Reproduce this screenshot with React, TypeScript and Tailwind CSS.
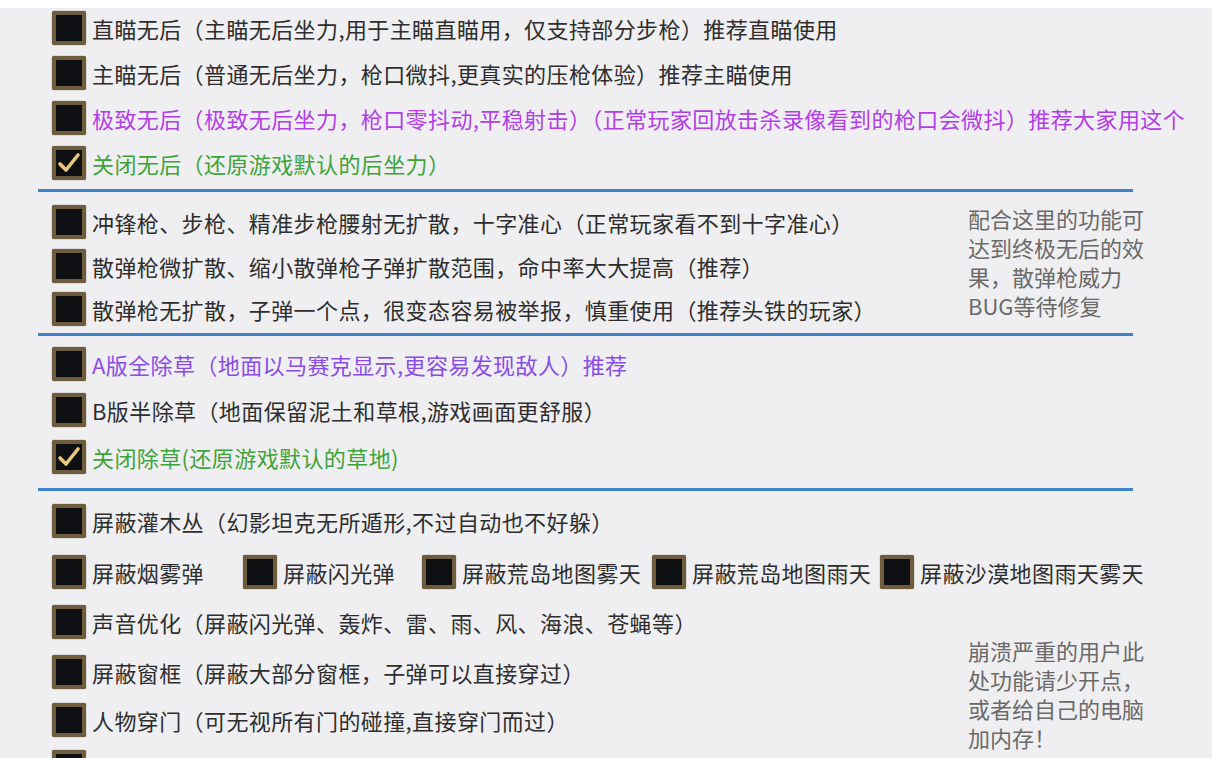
import React from "react";

const font = { fontFamily: '"Noto Sans CJK SC", "Noto Sans", sans-serif' };

function Box({ checked = false }: { checked?: boolean }) {
  return (
    <div className="flex h-[34px] w-[34px] shrink-0 items-center justify-center rounded-[2px] border-[4px] border-[#6f5c3c] bg-[#0e0f12] shadow-[0_0_1px_#3a2f1e]">
      {checked && (
        <svg viewBox="0 0 24 24" className="h-[24px] w-[24px]">
          <path d="M3 13 L9 19 L21 4" fill="none" stroke="#e9c77c" strokeWidth="3.6" strokeLinecap="round" strokeLinejoin="round" />
        </svg>
      )}
    </div>
  );
}

function Row({
  text,
  color = "text-[#2e2e2e]",
  checked,
  className = "",
}: {
  text: string;
  color?: string;
  checked?: boolean;
  className?: string;
}) {
  return (
    <div className={`flex shrink-0 items-center gap-[6px] ${className}`}>
      <Box checked={checked} />
      <span className={`whitespace-nowrap text-[22px] leading-[34px] tracking-[0.4px] ${color}`}>{text}</span>
    </div>
  );
}

function Divider({ className = "" }: { className?: string }) {
  return <div className={`ml-[38px] h-[3px] w-[1095px] bg-[#3f82cc] ${className}`} />;
}

function Note({ lines, className = "" }: { lines: string[]; className?: string }) {
  return (
    <div className={`text-[22px] leading-[29px] text-[#6a6a6a] ${className}`}>
      {lines.map((l) => (
        <div key={l} className="whitespace-nowrap">
          {l}
        </div>
      ))}
    </div>
  );
}

export default function App() {
  return (
    <div style={font} className="h-[758px] w-[1212px] overflow-hidden bg-[#efeff1]">
      <div className="h-[8px] bg-white" />
      <div className="flex flex-col pl-[52px] pt-[3px]">
        <Row text="直瞄无后（主瞄无后坐力,用于主瞄直瞄用，仅支持部分步枪）推荐直瞄使用" />
        <Row className="mt-[11px]" text="主瞄无后（普通无后坐力，枪口微抖,更真实的压枪体验）推荐主瞄使用" />
        <Row
          className="mt-[11px]"
          color="text-[#b23ee6]"
          text="极致无后（极致无后坐力，枪口零抖动,平稳射击）（正常玩家回放击杀录像看到的枪口会微抖）推荐大家用这个"
        />
        <Row className="mt-[11px]" checked color="text-[#3ea33a]" text="关闭无后（还原游戏默认的后坐力）" />
      </div>
      <Divider className="mt-[9px]" />

      <div className="flex pl-[52px] pt-[13px]">
        <div className="flex w-[916px] flex-col">
          <Row text="冲锋枪、步枪、精准步枪腰射无扩散，十字准心（正常玩家看不到十字准心）" />
          <Row className="mt-[10px]" text="散弹枪微扩散、缩小散弹枪子弹扩散范围，命中率大大提高（推荐）" />
          <Row className="mt-[9px]" text="散弹枪无扩散，子弹一个点，很变态容易被举报，慎重使用（推荐头铁的玩家）" />
        </div>
        <Note className="-mt-[1px]" lines={["配合这里的功能可", "达到终极无后的效", "果，散弹枪威力", "BUG等待修复"]} />
      </div>
      <Divider className="mt-[7px]" />

      <div className="flex flex-col pl-[52px] pt-[11px]">
        <Row color="text-[#8a4ce6]" text="A版全除草（地面以马赛克显示,更容易发现敌人）推荐" />
        <Row className="mt-[12px]" text="B版半除草（地面保留泥土和草根,游戏画面更舒服）" />
        <Row className="mt-[13px]" checked color="text-[#3ea33a]" text="关闭除草(还原游戏默认的草地)" />
      </div>
      <Divider className="mt-[14px]" />

      <div className="flex pl-[52px] pt-[13px]">
        <div className="flex w-[916px] shrink-0 flex-col">
          <Row text="屏蔽灌木丛（幻影坦克无所遁形,不过自动也不好躲）" />
          <div className="mt-[17px] flex">
            <Row className="w-[191px]" text="屏蔽烟雾弹" />
            <Row className="w-[179px]" text="屏蔽闪光弹" />
            <Row className="w-[230px]" text="屏蔽荒岛地图雾天" />
            <Row className="w-[228px]" text="屏蔽荒岛地图雨天" />
            <Row text="屏蔽沙漠地图雨天雾天" />
          </div>
          <Row className="mt-[16px]" text="声音优化（屏蔽闪光弹、轰炸、雷、雨、风、海浪、苍蝇等）" />
          <Row className="mt-[16px]" text="屏蔽窗框（屏蔽大部分窗框，子弹可以直接穿过）" />
          <Row className="mt-[14px]" text="人物穿门（可无视所有门的碰撞,直接穿门而过）" />
          <Row className="mt-[13px]" text="" />
        </div>
        <Note className="mt-[132px]" lines={["崩溃严重的用户此", "处功能请少开点，", "或者给自己的电脑", "加内存！"]} />
      </div>
    </div>
  );
}
